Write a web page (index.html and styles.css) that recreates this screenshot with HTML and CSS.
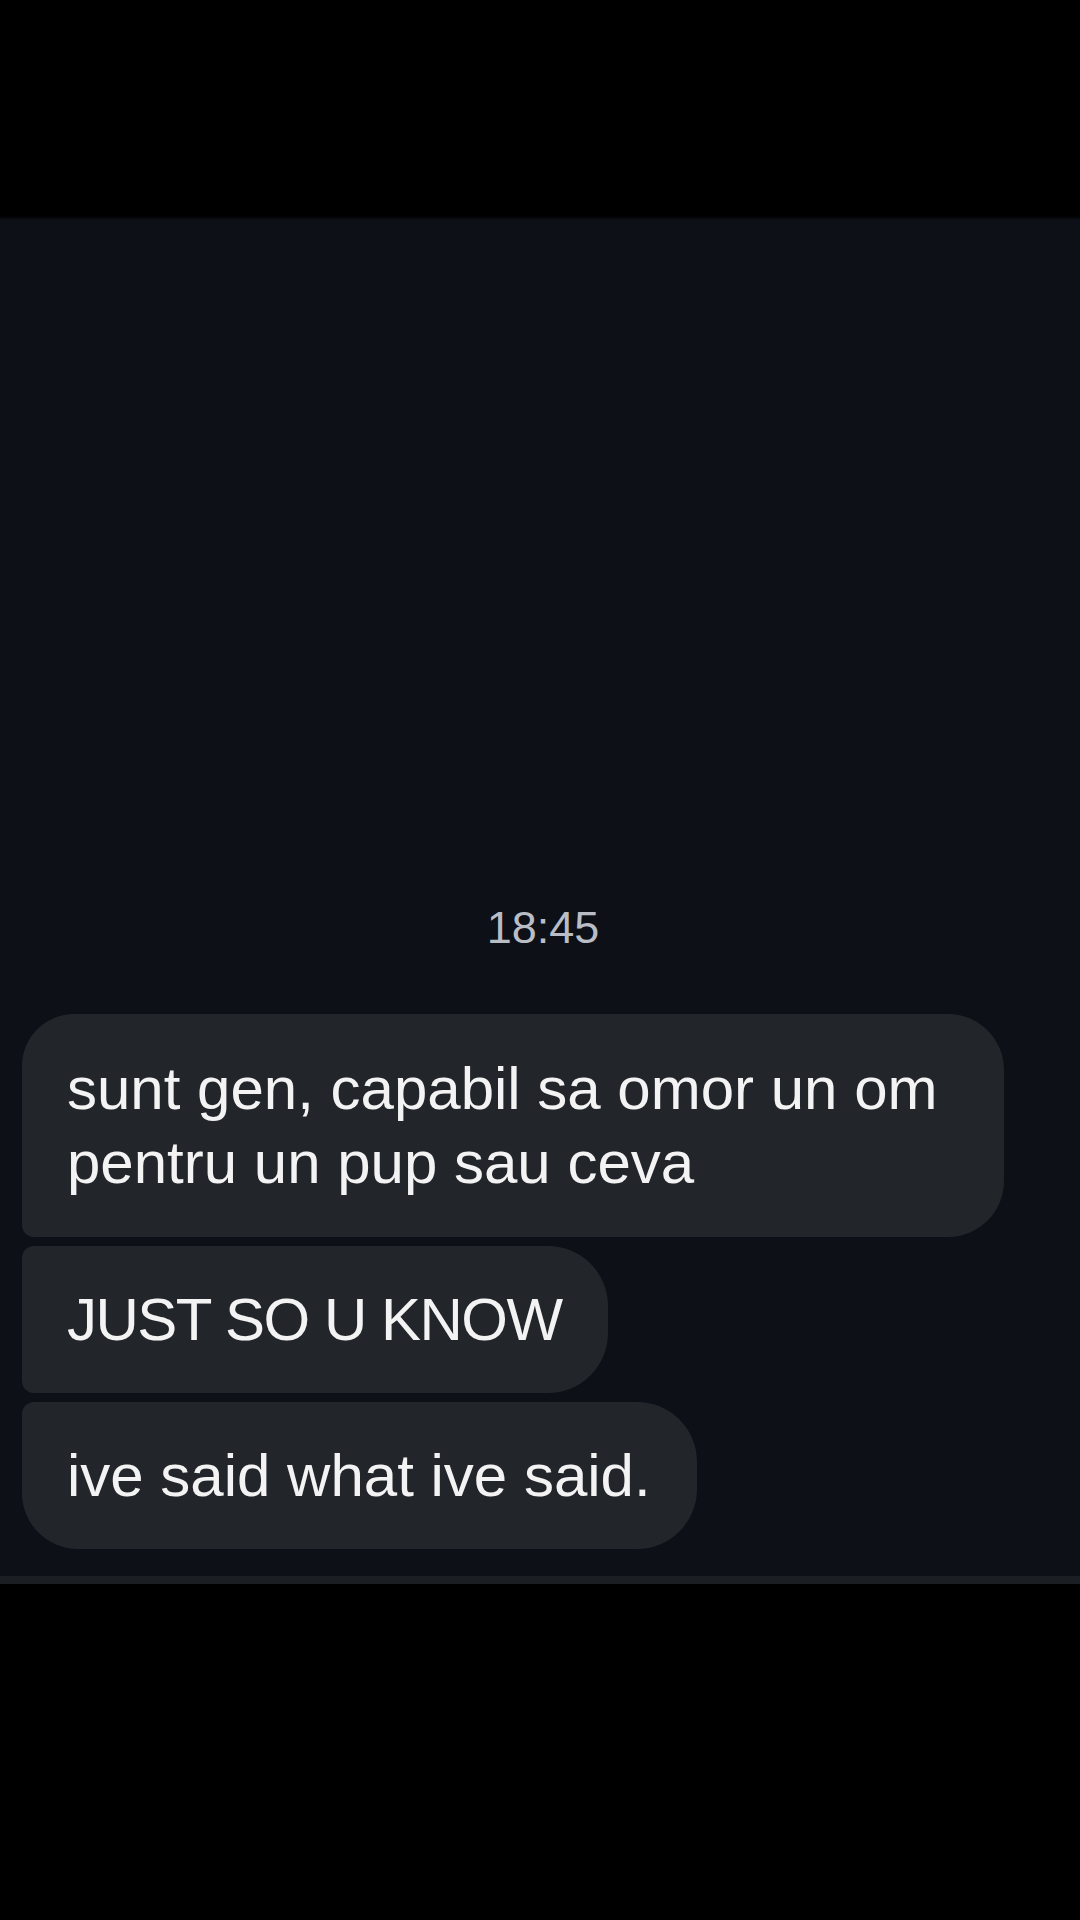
FILE: index.html
```html
<!DOCTYPE html>
<html>
<head>
<meta charset="utf-8">
<link rel="stylesheet" href="styles.css">
</head>
<body>
<div class="screen">
  <div class="top-bar"></div>
  <div class="chat">
    <div class="time">18:45</div>
    <div class="group">
      <div class="bubble first">sunt gen, capabil sa omor un om pentru un pup sau ceva</div>
      <div class="bubble middle">JUST SO U KNOW</div>
      <div class="bubble last">ive said what ive said.</div>
    </div>
  </div>
  <div class="divider"></div>
  <div class="bottom-bar"></div>
</div>
</body>
</html>
```
FILE: styles.css
```css
html, body {
  margin: 0;
  padding: 0;
  background: #000;
}
.screen {
  width: 1080px;
  height: 1920px;
  display: flex;
  flex-direction: column;
  background: #000;
  font-family: "Liberation Sans", Arial, sans-serif;
}
.top-bar {
  height: 220px;
  flex: none;
  background: linear-gradient(#000 0, #000 216px, #0d1017 220px);
}
.chat {
  height: 1356px;
  flex: none;
  background: #0d1017;
  display: flex;
  flex-direction: column;
  justify-content: flex-end;
  padding: 0 0 27px 0;
  box-sizing: border-box;
}
.time {
  text-align: center;
  color: #b9bdc5;
  font-size: 45px;
  line-height: 54px;
  margin: 0 0 59px 6px;
}
.group {
  display: flex;
  flex-direction: column;
  align-items: flex-start;
  gap: 9px;
  padding-left: 22px;
}
.bubble {
  background: #22252a;
  color: #f3f3f3;
  font-size: 60px;
  line-height: 74px;
  padding: 37px 46px 36px 45px;
  max-width: 982px;
  box-sizing: border-box;
  border-radius: 12px 60px 60px 12px;
}
.bubble.first {
  width: 982px;
  padding-top: 38px;
  padding-bottom: 37px;
  border-radius: 52px 56px 56px 12px;
}
.bubble.middle {
  letter-spacing: -1.5px;
}
.bubble.last {
  border-radius: 12px 60px 60px 56px;
}
.divider {
  height: 8px;
  flex: none;
  background: #1b1e23;
}
.bottom-bar {
  flex: 1;
  background: #000;
}
```
